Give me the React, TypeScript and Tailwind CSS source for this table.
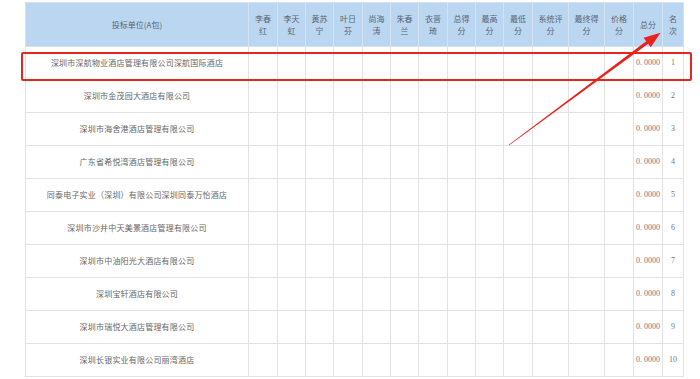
import React from 'react';

const widths = [223, 29, 28, 28, 29, 28, 28, 29, 28, 28, 29, 36, 36, 29, 29, 21];

const headers: string[][] = [
  ['投标单位(A包)'],
  ['李春', '红'],
  ['李天', '虹'],
  ['黄苏', '宁'],
  ['叶日', '芬'],
  ['尚海', '涛'],
  ['朱春', '兰'],
  ['衣晋', '琦'],
  ['总得', '分'],
  ['最高', '分'],
  ['最低', '分'],
  ['系统评', '分'],
  ['最终得', '分'],
  ['价格', '分'],
  ['总分'],
  ['名', '次'],
];

const companies = [
  '深圳市深航物业酒店管理有限公司深航国际酒店',
  '深圳市金茂园大酒店有限公司',
  '深圳市海舍港酒店管理有限公司',
  '广东省希悦湾酒店管理有限公司',
  '同泰电子实业（深圳）有限公司深圳同泰万怡酒店',
  '深圳市沙井中天美景酒店管理有限公司',
  '深圳市中油阳光大酒店有限公司',
  '深圳宝轩酒店有限公司',
  '深圳市瑞悦大酒店管理有限公司',
  '深圳长银实业有限公司丽湾酒店',
];

const cjk = { fontFamily: '"Noto Sans CJK SC", "Noto Sans", sans-serif' };
const serif = { fontFamily: '"Liberation Serif", "DejaVu Serif", serif' };

export default function App() {
  return (
    <div className="relative w-[700px] h-[379px] bg-white overflow-hidden">
      <div className="pt-[2px] pl-[25px]">
        <table className="table-fixed border-collapse w-[658px]" style={cjk}>
          <colgroup>
            {widths.map((w, i) => (
              <col key={i} style={{ width: w }} />
            ))}
          </colgroup>
          <thead>
            <tr className="h-[44px] bg-[#bbd6f0]">
              {headers.map((h, i) => (
                <th
                  key={i}
                  className="border border-[#d3e3f3] p-0 text-center align-middle font-normal text-[8px] leading-[12px] text-[#5a6470]"
                >
                  {h.map((line, j) => (
                    <div key={j}>{line}</div>
                  ))}
                </th>
              ))}
            </tr>
          </thead>
          <tbody>
            {companies.map((name, r) => (
              <tr key={r} className="h-[33px]">
                <td className="border border-[#e2e2e2] p-0 text-center text-[8px] tracking-[0.2px] text-[#666]">
                  {name}
                </td>
                {widths.slice(1, 14).map((_, c) => (
                  <td key={c} className="border border-[#e2e2e2] p-0" />
                ))}
                <td className="border border-[#e2e2e2] p-0 text-center text-[8px] text-[#777]" style={serif}>
                  0.&nbsp;0000
                </td>
                <td className="border border-[#e2e2e2] p-0 text-center text-[8px] text-[#777]" style={serif}>
                  {r + 1}
                </td>
              </tr>
            ))}
          </tbody>
        </table>
      </div>

      {/* highlight box */}
      <div className="absolute left-[21px] top-[52px] w-[671px] h-[29px] border-2 border-[#e3261e] rounded-[2px] pointer-events-none" />

      {/* arrow */}
      <svg className="absolute left-0 top-0 pointer-events-none" width="700" height="379" viewBox="0 0 700 379">
        <polygon
          points="508.8,144.8 646.2,41.2 643.6,37.8 660.5,32.8 650.8,47.2 648.2,43.8 509.2,145.2"
          fill="#e8231b"
        />
      </svg>
    </div>
  );
}
